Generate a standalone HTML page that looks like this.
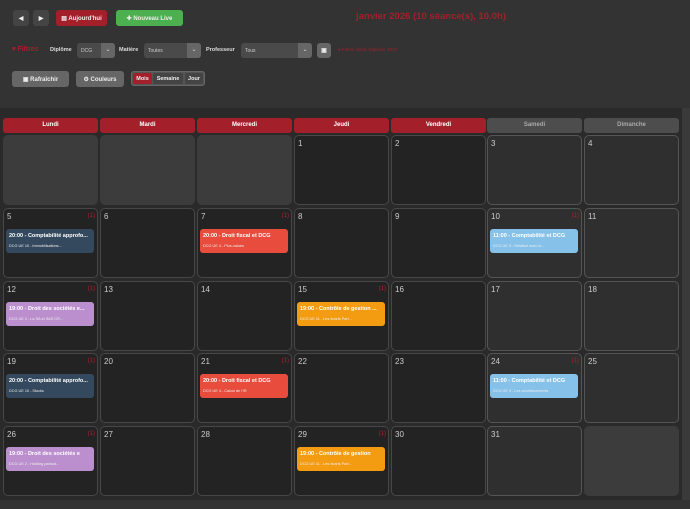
<!DOCTYPE html>
<html><head><meta charset="utf-8"><style>
*{box-sizing:border-box;margin:0;padding:0}
body{width:690px;height:509px;background:#333;font-family:"Liberation Sans",sans-serif;position:relative;overflow:hidden;color:#ddd}
.a{position:absolute}
.btn{position:absolute;border-radius:3px;font-size:6px;font-weight:bold;color:#eee;display:flex;align-items:center;justify-content:center}
.sel{position:absolute;height:15px;background:#4a4a4a;border-radius:3px;font-size:5px;color:#ccc;padding:5px 4px}
.sel i{position:absolute;right:0;top:0;width:14px;height:15px;background:#666;border-radius:0 3px 3px 0;font-style:normal;color:#ddd;text-align:center;line-height:15px;font-size:6px}
.lbl{position:absolute;font-size:5.5px;font-weight:bold;color:#ddd}
.hd{position:absolute;top:118px;height:15px;width:95px;border-radius:3px;background:#a3202b;color:#fff;font-size:6px;font-weight:bold;text-align:center;line-height:15px}
.hd.w{background:#4d4d4d;color:#aaa}
.c{position:absolute;width:95px;height:70px;border:1.5px solid #474747;border-radius:5px;background:#232323}
.c.o{background:#3c3c3c;border-color:#3c3c3c}
.c.we{background:#2f2f2f;border-color:#555}
.n{position:absolute;left:3px;top:3px;font-size:8px;color:#ccc}
.k{position:absolute;right:2px;top:4px;font-size:6px;color:#b02030}
.e{position:absolute;left:2px;top:20px;width:88px;height:24px;border-radius:3px;color:#fff;padding:4px 3px}
.e b{display:block;font-size:5.5px;white-space:nowrap;overflow:hidden}
.e s{display:block;text-decoration:none;font-size:3.8px;margin-top:5px;color:#eee;white-space:nowrap}
</style></head><body>
<div class="btn" style="left:13px;top:10px;width:16px;height:16px;background:#444;font-size:6px">◀</div>
<div class="btn" style="left:33px;top:10px;width:16px;height:16px;background:#444;font-size:6px">▶</div>
<div class="btn" style="left:56px;top:10px;width:51px;height:16px;background:#a3202b">▤ Aujourd'hui</div>
<div class="btn" style="left:116px;top:10px;width:67px;height:16px;background:#4caf50">✚&nbsp;Nouveau Live</div>
<div class="a" style="left:356px;top:11px;font-size:9.5px;color:#a3202b;font-weight:bold">janvier 2026 (10 séance(s), 10.0h)</div>

<div class="a" style="left:12px;top:45px;font-size:7px;color:#a3202b;font-weight:bold">▾ Filtres</div>
<div class="lbl" style="left:50px;top:47px">Diplôme</div>
<div class="sel" style="left:77px;top:43px;width:38px">DCG<i>⌄</i></div>
<div class="lbl" style="left:119px;top:47px">Matière</div>
<div class="sel" style="left:144px;top:43px;width:57px">Toutes<i>⌄</i></div>
<div class="lbl" style="left:206px;top:47px">Professeur</div>
<div class="sel" style="left:241px;top:43px;width:71px">Tous<i>⌄</i></div>
<div class="btn" style="left:317px;top:43px;width:14px;height:15px;background:#666;font-size:6px">▣</div>
<div class="a" style="left:338px;top:47px;font-size:4.5px;color:#a3202b">● Filtres actifs: Diplôme: DCG</div>

<div class="btn" style="left:12px;top:71px;width:57px;height:16px;background:#666">▣ Rafraîchir</div>
<div class="btn" style="left:76px;top:71px;width:48px;height:16px;background:#666">⚙ Couleurs</div>
<div class="a" style="left:131px;top:71px;width:74px;height:15px;background:#555;border-radius:3px;border:1px solid #666"></div>
<div class="btn" style="left:133px;top:73px;width:19px;height:11px;background:#a3202b;border-radius:2px;font-size:5.5px">Mois</div>
<div class="btn" style="left:153px;top:73px;width:30px;height:11px;background:#444;border-radius:2px;font-size:5.5px">Semaine</div>
<div class="btn" style="left:185px;top:73px;width:18px;height:11px;background:#444;border-radius:2px;font-size:5.5px">Jour</div>

<div class="a" style="left:0;top:108px;width:682px;height:392px;background:#2a2a2a"></div>
<div class="a" style="left:682px;top:108px;width:8px;height:392px;background:#3a3a3a"></div>

<div class="hd" style="left:3px">Lundi</div>
<div class="hd" style="left:100px">Mardi</div>
<div class="hd" style="left:197px">Mercredi</div>
<div class="hd" style="left:294px">Jeudi</div>
<div class="hd" style="left:391px">Vendredi</div>
<div class="hd w" style="left:487px">Samedi</div>
<div class="hd w" style="left:584px">Dimanche</div>

<div class="c o" style="left:3px;top:135px"></div>
<div class="c o" style="left:100px;top:135px"></div>
<div class="c o" style="left:197px;top:135px"></div>
<div class="c" style="left:294px;top:135px"><span class="n">1</span></div>
<div class="c" style="left:391px;top:135px"><span class="n">2</span></div>
<div class="c we" style="left:487px;top:135px"><span class="n">3</span></div>
<div class="c we" style="left:584px;top:135px"><span class="n">4</span></div>

<div class="c" style="left:3px;top:208px"><span class="n">5</span><span class="k">(1)</span><div class="e" style="background:#34495e"><b>20:00 - Comptabilité approfo...</b><s>DCG UE 10 - Immobilisations...</s></div></div>
<div class="c" style="left:100px;top:208px"><span class="n">6</span></div>
<div class="c" style="left:197px;top:208px"><span class="n">7</span><span class="k">(1)</span><div class="e" style="background:#e74c3c"><b>20:00 - Droit fiscal et DCG</b><s>DCG UE 4 - Plus-values</s></div></div>
<div class="c" style="left:294px;top:208px"><span class="n">8</span></div>
<div class="c" style="left:391px;top:208px"><span class="n">9</span></div>
<div class="c we" style="left:487px;top:208px"><span class="n">10</span><span class="k">(1)</span><div class="e" style="background:#85c1e9"><b>11:00 - Comptabilité et DCG</b><s>DCG UE 9 - Relation avec le...</s></div></div>
<div class="c we" style="left:584px;top:208px"><span class="n">11</span></div>

<div class="c" style="left:3px;top:281px"><span class="n">12</span><span class="k">(1)</span><div class="e" style="background:#bb8fce"><b>19:00 - Droit des sociétés e...</b><s>DCG UE 2 - La SA et SAS CR...</s></div></div>
<div class="c" style="left:100px;top:281px"><span class="n">13</span></div>
<div class="c" style="left:197px;top:281px"><span class="n">14</span></div>
<div class="c" style="left:294px;top:281px"><span class="n">15</span><span class="k">(1)</span><div class="e" style="background:#f39c12"><b>19:00 - Contrôle de gestion ...</b><s>DCG UE 11 - Les écarts Part...</s></div></div>
<div class="c" style="left:391px;top:281px"><span class="n">16</span></div>
<div class="c we" style="left:487px;top:281px"><span class="n">17</span></div>
<div class="c we" style="left:584px;top:281px"><span class="n">18</span></div>

<div class="c" style="left:3px;top:353px"><span class="n">19</span><span class="k">(1)</span><div class="e" style="background:#34495e"><b>20:00 - Comptabilité approfo...</b><s>DCG UE 10 - Stocks</s></div></div>
<div class="c" style="left:100px;top:353px"><span class="n">20</span></div>
<div class="c" style="left:197px;top:353px"><span class="n">21</span><span class="k">(1)</span><div class="e" style="background:#e74c3c"><b>20:00 - Droit fiscal et DCG</b><s>DCG UE 4 - Calcul de l'IR</s></div></div>
<div class="c" style="left:294px;top:353px"><span class="n">22</span></div>
<div class="c" style="left:391px;top:353px"><span class="n">23</span></div>
<div class="c we" style="left:487px;top:353px"><span class="n">24</span><span class="k">(1)</span><div class="e" style="background:#85c1e9"><b>11:00 - Comptabilité et DCG</b><s>DCG UE 9 - Les amortissements</s></div></div>
<div class="c we" style="left:584px;top:353px"><span class="n">25</span></div>

<div class="c" style="left:3px;top:426px"><span class="n">26</span><span class="k">(1)</span><div class="e" style="background:#bb8fce"><b>19:00 - Droit des sociétés e</b><s>DCG UE 2 - Holding partout...</s></div></div>
<div class="c" style="left:100px;top:426px"><span class="n">27</span></div>
<div class="c" style="left:197px;top:426px"><span class="n">28</span></div>
<div class="c" style="left:294px;top:426px"><span class="n">29</span><span class="k">(1)</span><div class="e" style="background:#f39c12"><b>19:00 - Contrôle de gestion</b><s>DCG UE 11 - Les écarts Part...</s></div></div>
<div class="c" style="left:391px;top:426px"><span class="n">30</span></div>
<div class="c we" style="left:487px;top:426px"><span class="n">31</span></div>
<div class="c o" style="left:584px;top:426px"></div>
</body></html>
